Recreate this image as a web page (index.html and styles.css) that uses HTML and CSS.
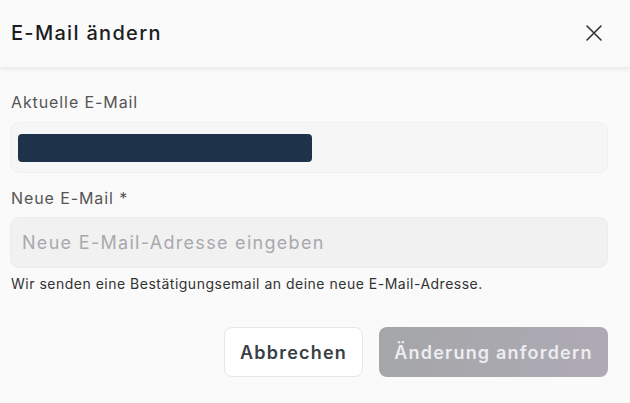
FILE: index.html
```html
<!DOCTYPE html>
<html lang="de">
<head>
<meta charset="utf-8">
<link rel="stylesheet" href="styles.css">
</head>
<body>
<div class="dialog">
  <header class="head">
    <h1 class="title">E-Mail ändern</h1>
    <button class="close" aria-label="Schließen">
      <svg width="18" height="18" viewBox="0 0 18 18"><path d="M2 2L16 16M16 2L2 16" stroke="#333" stroke-width="1.6" stroke-linecap="round"/></svg>
    </button>
  </header>
  <main class="body">
    <label class="label">Aktuelle E-Mail</label>
    <div class="field current"><span class="redact"></span></div>
    <label class="label second">Neue E-Mail *</label>
    <div class="field input"><span class="ph">Neue E-Mail-Adresse eingeben</span></div>
    <p class="help">Wir senden eine Bestätigungsemail an deine neue E-Mail-Adresse.</p>
    <div class="actions">
      <button class="btn cancel">Abbrechen</button>
      <button class="btn submit">Änderung anfordern</button>
    </div>
  </main>
</div>
</body>
</html>
```
FILE: styles.css
```css
* { box-sizing: border-box; }
html, body { margin: 0; padding: 0; background: #fafafa; }
body { font-family: Inter, "Noto Sans", sans-serif; width: 630px; height: 403px; overflow: hidden; }
.dialog { width: 630px; }
.head {
  height: 67px; display: flex; align-items: center; justify-content: space-between;
  padding: 0 27px 2px 11px; background: #fafafa;
  box-shadow: 0 2px 4px rgba(0,0,0,0.08);
  position: relative;
}
.title { margin: 0; font-size: 20px; font-weight: 500; color: #1d1d1f; letter-spacing: 1.3px; }
.close { border: 0; background: none; padding: 0; width: 18px; height: 18px; display: flex; }
.body { padding: 25px 22px 0 10px; display: flex; flex-direction: column; }
.label { display: block; font-size: 16px; color: #555; margin: 0 0 10px 1px; line-height: 20px; letter-spacing: 0.9px; }
.label.second { margin-top: 15px; margin-bottom: 9px; }
.field { height: 51px; border-radius: 9px; border: 1px solid #efefef; display: flex; align-items: center; }
.current { background: #f6f6f6; padding-left: 7px; }
.redact { width: 294px; height: 28px; background: #1e3349; border-radius: 4px; }
.input { background: #f1f1f1; padding-left: 11px; border-color: #ececec; }
.ph { font-size: 18px; color: #a9a9ad; letter-spacing: 1.3px; }
.help { margin: 7px 0 0 1px; font-size: 14px; color: #333; line-height: 18px; letter-spacing: 0.5px; }
.actions { display: flex; justify-content: flex-end; gap: 16px; margin-top: 34px; }
.btn { height: 50px; border-radius: 8px; font-family: inherit; font-size: 18px; font-weight: 600; letter-spacing: 1.2px; }
.cancel { width: 139px; background: #fff; border: 1px solid #e6e6e6; color: #3a3f44; }
.submit { width: 229px; border: 0; background: linear-gradient(100deg, #a4a6a8, #aeaab5); color: #ededf0; }
```
